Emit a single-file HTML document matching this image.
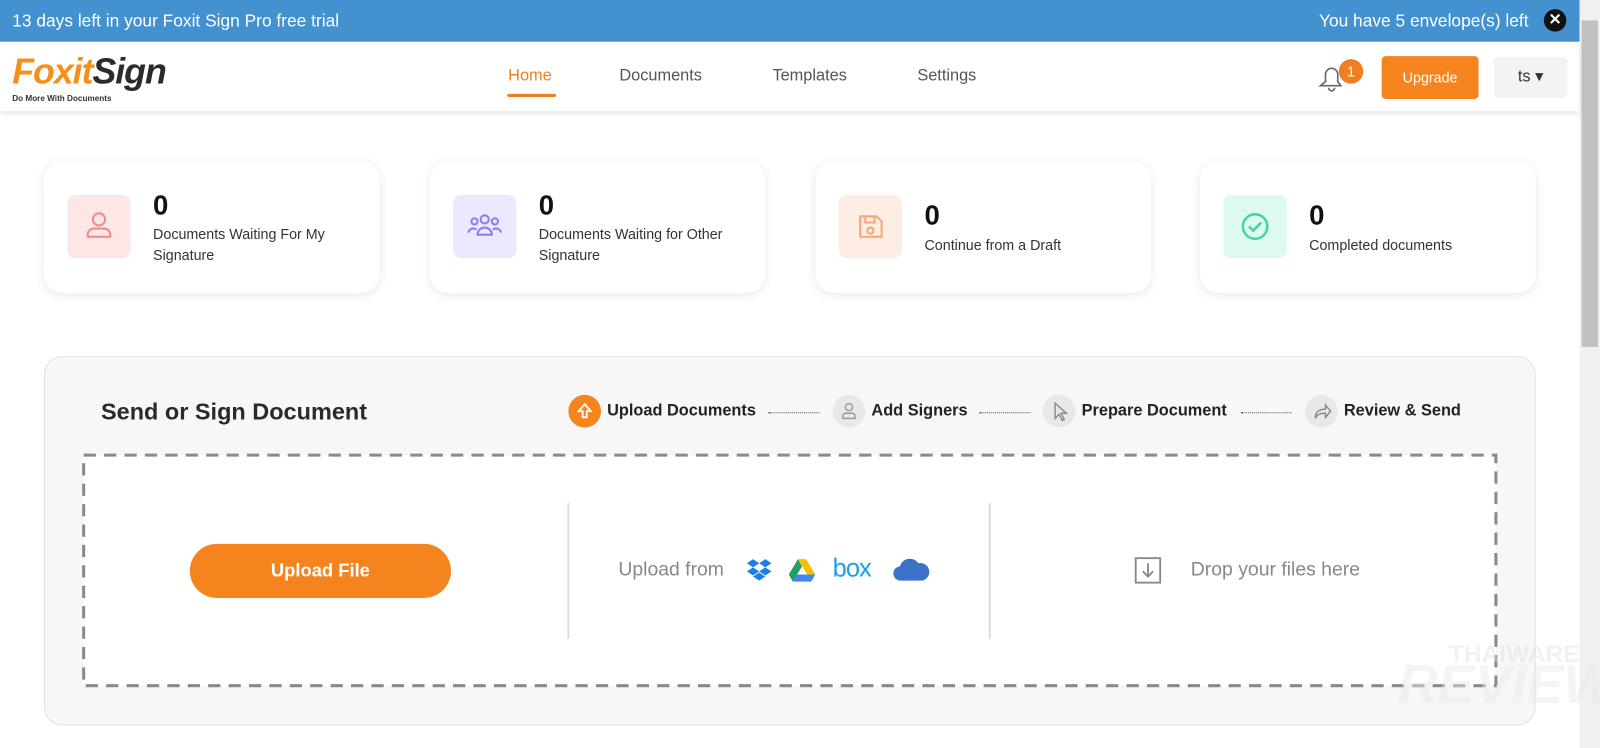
<!DOCTYPE html>
<html><head><meta charset="utf-8"><style>
*{box-sizing:border-box;margin:0;padding:0}
html,body{width:1600px;height:733px;overflow:hidden;background:#fff}
#w{position:absolute;left:0;top:0;width:1568px;height:719px;transform:scale(1.0204);transform-origin:0 0;font-family:"Liberation Sans",Arial,sans-serif}
.topbar{position:absolute;left:0;top:0;width:1548px;height:41px;background:#4392cf;color:#fff;font-size:17px}
.topbar .l{position:absolute;left:12px;top:11px}
.topbar .r{position:absolute;right:50px;top:11px}
.x{position:absolute;left:1513px;top:9px;width:22px;height:22px;border-radius:50%;background:#111;color:#fff;font-size:15px;font-weight:bold;text-align:center;line-height:22px}
.scroll{position:absolute;left:1548px;top:0;width:20px;height:733px;background:#f0f0f0}
.thumb{position:absolute;left:1550px;top:20px;width:16px;height:320px;background:#c1c1c1}
.hdr{position:absolute;left:0;top:41px;width:1548px;height:68px;background:#fff;box-shadow:0 2px 5px rgba(0,0,0,.12)}
.nav{position:absolute;top:66px;font-size:16px;color:#555}
.card{position:absolute;top:158px;width:329px;height:129px;background:#fff;border-radius:18px;box-shadow:0 2px 10px rgba(0,0,0,.09)}
.ic{position:absolute;left:23px;top:33px;width:62px;height:62px;border-radius:8px}
.num{position:absolute;left:107px;font-size:27px;font-weight:bold;color:#111}
.lbl{position:absolute;left:107px;font-size:14px;color:#333;line-height:21px}
.panel{position:absolute;left:43px;top:349px;width:1462px;height:362px;background:#f7f7f7;border:1px solid #e2e2e2;border-radius:18px}
.step{position:absolute;top:387px;height:32px;font-size:16px;font-weight:bold;color:#222;line-height:32px}
.circ{display:inline-block;width:32px;height:32px;border-radius:50%;background:#e8e8e8;vertical-align:top;margin-right:6px;position:relative}
.dots{position:absolute;top:404px;border-top:1px dotted #555;height:1px}
</style></head><body><div id="w">
<div class="topbar"><span class="l">13 days left in your Foxit Sign Pro free trial</span><span class="r">You have 5 envelope(s) left</span></div>
<div class="x">✕</div>
<div class="scroll"></div><div class="thumb"></div>
<div class="hdr"></div>
<div style="position:absolute;left:12px;top:52px;font-weight:bold;font-style:italic;font-size:35px;letter-spacing:-1px;line-height:38px"><span style="color:#f39019">Foxit</span><span style="color:#2b2b2b">Sign</span></div>
<div style="position:absolute;left:12px;top:92px;font-size:8px;font-weight:bold;color:#333">Do More With Documents</div>
<div class="nav" style="left:498px;color:#f0801f">Home</div>
<div style="position:absolute;left:497px;top:92px;width:48px;height:3px;background:#f0801f;border-radius:2px"></div>
<div class="nav" style="left:607px">Documents</div>
<div class="nav" style="left:757px">Templates</div>
<div class="nav" style="left:899px">Settings</div>
<svg style="position:absolute;left:1290px;top:60px" width="30" height="32" viewBox="0 0 30 32"><path d="M4 24h20l-3-4v-7a6 6 0 0 0-12 0v7z M12 26a3 3 0 0 0 6 0" fill="none" stroke="#666" stroke-width="1.6"/></svg>
<div style="position:absolute;left:1312px;top:58px;width:24px;height:24px;border-radius:50%;background:#f0801f;color:#fff;font-size:14px;text-align:center;line-height:24px">1</div>
<div style="position:absolute;left:1354px;top:55px;width:95px;height:42px;background:#f5841f;border-radius:4px;color:#fff;font-size:14px;text-align:center;line-height:42px">Upgrade</div>
<div style="position:absolute;left:1464px;top:56px;width:72px;height:40px;background:#f3f3f3;border-radius:4px;color:#333;font-size:16px;text-align:center;line-height:40px">ts ▾</div>

<div class="card" style="left:43px"><div class="ic" style="background:#fde6e6"><svg width="62" height="62"><circle cx="31" cy="24" r="6" fill="none" stroke="#f28a8a" stroke-width="2"/><path d="M20 41v-2a6 6 0 0 1 6-6h10a6 6 0 0 1 6 6v2z" fill="none" stroke="#f28a8a" stroke-width="2"/></svg></div><div class="num" style="top:28px">0</div><div class="lbl" style="top:61px">Documents Waiting For My<br>Signature</div></div>
<div class="card" style="left:421px"><div class="ic" style="background:#ece8fd"><svg width="62" height="62" fill="none" stroke="#8b7cf0" stroke-width="2"><circle cx="31" cy="24" r="4"/><circle cx="21" cy="26" r="3"/><circle cx="41" cy="26" r="3"/><path d="M24 39a7 7 0 0 1 14 0z M15 37a5 5 0 0 1 8-3 M47 37a5 5 0 0 0-8-3"/></svg></div><div class="num" style="top:28px">0</div><div class="lbl" style="top:61px">Documents Waiting for Other<br>Signature</div></div>
<div class="card" style="left:799px"><div class="ic" style="background:#feede3"><svg width="62" height="62" fill="none" stroke="#f5a77a" stroke-width="2"><path d="M21 21h16l5 5v15H21z M26 21v6h9v-6"/><circle cx="31" cy="35" r="3"/></svg></div><div class="num" style="top:38px">0</div><div class="lbl" style="top:72px">Continue from a Draft</div></div>
<div class="card" style="left:1176px"><div class="ic" style="background:#defaf0"><svg width="62" height="62" fill="none" stroke="#3ed69a" stroke-width="2.4"><circle cx="31" cy="31" r="12"/><path d="M25 31l4 4 8-8"/></svg></div><div class="num" style="top:38px">0</div><div class="lbl" style="top:72px">Completed documents</div></div>

<div class="panel"></div>
<div style="position:absolute;left:99px;top:390px;font-size:23px;font-weight:bold;color:#2a2a2a">Send or Sign Document</div>
<div class="step" style="left:557px;"><span class="circ" style="background:#f5841f"><svg width="32" height="32"><path d="M16 9l-6 7h4v6h4v-6h4z" fill="none" stroke="#fff" stroke-width="1.8"/></svg></span>Upload Documents</div>
<div class="dots" style="left:753px;width:50px"></div>
<div class="step" style="left:816px"><span class="circ"><svg width="32" height="32" fill="none" stroke="#999" stroke-width="1.4"><circle cx="16" cy="12" r="3.5"/><path d="M10 23v-2a3 3 0 0 1 3-3h6a3 3 0 0 1 3 3v2z"/></svg></span>Add Signers</div>
<div class="dots" style="left:960px;width:50px"></div>
<div class="step" style="left:1022px"><span class="circ"><svg width="32" height="32" fill="none" stroke="#888" stroke-width="1.4"><path d="M12 8v15l4-4 3 6 2-1-3-6h5z"/></svg></span>Prepare Document</div>
<div class="dots" style="left:1216px;width:50px"></div>
<div class="step" style="left:1279px"><span class="circ"><svg width="32" height="32" fill="none" stroke="#888" stroke-width="1.4"><path d="M10 23c0-6 3-9 10-9v-4l5 6-5 6v-4c-5 0-8 1-10 5z"/></svg></span>Review &amp; Send</div>

<svg style="position:absolute;left:80px;top:444px" width="1388" height="230"><rect x="2" y="2" width="1384" height="226" fill="#fff" stroke="#8a8a8a" stroke-width="3" stroke-dasharray="12 8"/></svg>
<div style="position:absolute;left:556px;top:493px;width:2px;height:133px;background:#ddd"></div>
<div style="position:absolute;left:969px;top:493px;width:2px;height:133px;background:#ddd"></div>
<div style="position:absolute;left:186px;top:533px;width:256px;height:53px;background:#f5841f;border-radius:27px;color:#fff;font-size:18px;font-weight:bold;text-align:center;line-height:53px">Upload File</div>
<div style="position:absolute;left:606px;top:548px;font-size:19px;color:#888">Upload from</div>
<svg style="position:absolute;left:731px;top:546px" width="26" height="24"><g fill="#1d7ee6"><path d="M7 2l6 4-6 4-6-4z M19 2l6 4-6 4-6-4z M7 10l6 4-6 4-6-4z M19 10l6 4-6 4-6-4z M7 19l6-4 6 4-6 4z"/></g></svg>
<svg style="position:absolute;left:773px;top:547px" width="26" height="24"><path d="M9 1h8l9 15h-8z" fill="#fbbc04"/><path d="M9 1l4 7-9 15-4-7z" fill="#1ea362"/><path d="M4 23l4-7h18l-4 7z" fill="#4285f4"/></svg>
<div style="position:absolute;left:816px;top:543px;font-size:25px;color:#1aa3e8;letter-spacing:-1px">box</div>
<svg style="position:absolute;left:875px;top:546px" width="36" height="24"><path d="M8 23a7 7 0 0 1-1-14 10 10 0 0 1 18-3 8 8 0 0 1 4 17z" fill="#3a72c9"/></svg>
<svg style="position:absolute;left:1111px;top:545px" width="28" height="28" fill="none" stroke="#888" stroke-width="1.8"><rect x="2" y="2" width="24" height="24"/><path d="M14 7v13 M9 15l5 5 5-5"/></svg>
<div style="position:absolute;left:1167px;top:548px;font-size:19px;color:#888">Drop your files here</div>
<div style="position:absolute;left:1420px;top:628px;font-size:24px;font-weight:bold;color:rgba(225,225,225,.45)">THAIWARE</div>
<div style="position:absolute;left:1370px;top:640px;font-size:54px;font-weight:bold;font-style:italic;color:rgba(230,230,230,.45)">REVIEW</div>
</div></body></html>
